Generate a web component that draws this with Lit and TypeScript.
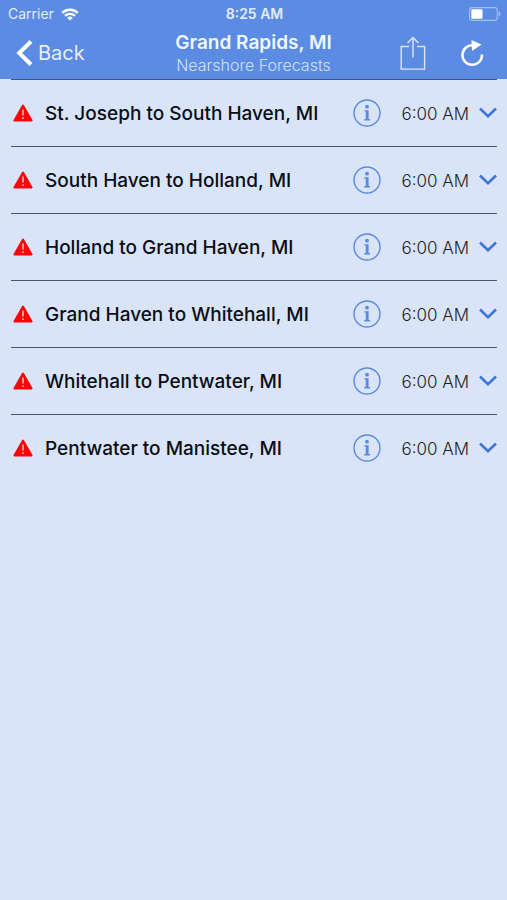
import { LitElement, html, css } from "lit";
import { customElement, property } from "lit/decorators.js";

interface Forecast {
  name: string;
  time: string;
}

const forecasts: Forecast[] = [
  { name: "St. Joseph to South Haven, MI", time: "6:00 AM" },
  { name: "South Haven to Holland, MI", time: "6:00 AM" },
  { name: "Holland to Grand Haven, MI", time: "6:00 AM" },
  { name: "Grand Haven to Whitehall, MI", time: "6:00 AM" },
  { name: "Whitehall to Pentwater, MI", time: "6:00 AM" },
  { name: "Pentwater to Manistee, MI", time: "6:00 AM" },
];

const reset = css`
  * {
    box-sizing: border-box;
  }
  svg {
    display: block;
    flex: none;
  }
  button {
    display: flex;
    align-items: center;
    border: 0;
    padding: 0;
    margin: 0;
    background: none;
    color: inherit;
    font: inherit;
    cursor: pointer;
  }
`;

@customElement("status-bar")
export class StatusBar extends LitElement {
  static styles = [
    reset,
    css`
      :host {
        display: grid;
        grid-template-columns: 1fr auto 1fr;
        align-items: center;
        height: 28px;
        padding: 0 6px 0 8px;
        font-size: 14px;
        line-height: 20px;
        color: #e3edff;
      }
      .carrier {
        display: flex;
        align-items: center;
        gap: 7px;
      }
      .clock {
        font-weight: 600;
      }
      .battery {
        justify-self: end;
      }
    `,
  ];

  render() {
    return html`
      <div class="carrier">
        <span>Carrier</span>
        <svg width="18" height="13" viewBox="0 0 18 13" fill="none" stroke="#fff" stroke-width="2.3">
          <path d="M1.2 4.9a11.2 11.2 0 0 1 15.6 0" />
          <path d="M4 7.8a7.2 7.2 0 0 1 10 0" />
          <path d="M9 12.6 6.2 9.9a4 4 0 0 1 5.6 0z" fill="#fff" stroke="none" />
        </svg>
      </div>
      <span class="clock">8:25 AM</span>
      <svg class="battery" width="32" height="14" viewBox="0 0 32 14">
        <rect x="0.6" y="0.6" width="27.6" height="12.8" rx="2.4" fill="none" stroke="#a3c0f3" stroke-width="1.1" />
        <rect x="2.3" y="2.2" width="11.2" height="9.6" rx="0.8" fill="#fff" />
        <path d="M29.6 4.6q2 .8 2 2.4t-2 2.4z" fill="#a3c0f3" />
      </svg>
    `;
  }
}

@customElement("nav-bar")
export class NavBar extends LitElement {
  static styles = [
    reset,
    css`
      :host {
        display: grid;
        grid-template-columns: 1fr auto 1fr;
        height: 51px;
        padding: 0 22px 0 16px;
        color: #f1f6ff;
      }
      .back {
        justify-self: start;
        gap: 5px;
        padding-bottom: 2px;
        font-size: 20px;
        line-height: 28px;
        color: #e6eeff;
      }
      .titles {
        padding: 4px 0 0 6px;
        text-align: center;
      }
      h1,
      p {
        margin: 0;
        line-height: 22px;
      }
      h1 {
        font-size: 19px;
        font-weight: 600;
      }
      p {
        font-size: 16px;
        font-weight: 300;
        color: #d0e0ff;
      }
      .actions {
        display: flex;
        justify-content: flex-end;
        gap: 34px;
        padding-bottom: 2px;
      }
    `,
  ];

  render() {
    return html`
      <button class="back">
        <svg width="17" height="28" viewBox="0 0 17 28" fill="none" stroke="#fff" stroke-width="4">
          <path d="M15 2.5 3.2 14 15 25.5" />
        </svg>
        Back
      </button>
      <div class="titles">
        <h1>Grand Rapids, MI</h1>
        <p>Nearshore Forecasts</p>
      </div>
      <div class="actions">
        <button aria-label="Share">
          <svg width="26" height="34" viewBox="0 0 26 34" fill="none" stroke="#dbe8ff" stroke-width="1.4">
            <path d="M9 10.5H1.2V33.1H24.6V10.5H17M13 21.5V1.5M7.5 7 13 1.5 18.5 7" />
          </svg>
        </button>
        <button aria-label="Refresh">
          <svg width="25" height="28" viewBox="0 0 25 28">
            <path d="M13 6.3A9.8 9.8 0 1 0 22 15.5" fill="none" stroke="#fff" stroke-width="2.5" />
            <path d="M11.5 1 21.5 5.6 12 12z" fill="#fff" />
          </svg>
        </button>
      </div>
    `;
  }
}

@customElement("forecast-row")
export class ForecastRow extends LitElement {
  @property({ attribute: false }) forecast!: Forecast;

  static styles = [
    reset,
    css`
      :host {
        display: flex;
        align-items: center;
        height: 67px;
        border-top: 1px solid #4c5566;
        padding-left: 2px;
      }
      .name,
      .time {
        padding-top: 2px;
        line-height: 24px;
        white-space: nowrap;
      }
      .name {
        flex: 1;
        margin: 0 0 0 12px;
        font-size: 19px;
        font-weight: 500;
        color: #0a0d14;
      }
      .time {
        margin: 0 10px 0 20px;
        font-size: 17px;
        font-weight: 300;
        color: #1b1f28;
      }
    `,
  ];

  render() {
    const { name, time } = this.forecast;
    return html`
      <svg width="20" height="18" viewBox="0 0 20 18" role="img" aria-label="Warning">
        <path d="M10 1.5 18.6 16.5H1.4z" fill="#fb0508" stroke="#fb0508" stroke-width="2" stroke-linejoin="round" />
        <path d="M10 5.5V11.5M10 13.2V15" stroke="#ffc4cb" stroke-width="1.5" />
      </svg>
      <h2 class="name">${name}</h2>
      <button aria-label="About ${name}">
        <svg width="28" height="28" viewBox="0 0 28 28">
          <circle cx="14" cy="14" r="13" fill="none" stroke="#5b8ae0" stroke-width="1.4" />
          <circle cx="14" cy="7.7" r="1.9" fill="#5b8ae0" />
          <path d="M11.3 11.3H15.6V20.1H17.1V21.4H11.2V20.1H12.7V12.5H11.3z" fill="#5b8ae0" />
        </svg>
      </button>
      <time class="time">${time}</time>
      <button aria-label="Expand ${name}">
        <svg width="18" height="12" viewBox="0 0 18 12" fill="none" stroke="#3f74d9" stroke-width="2.6">
          <path d="M1 1.5 9 9.2 17 1.5" />
        </svg>
      </button>
    `;
  }
}

@customElement("app-root")
export class AppRoot extends LitElement {
  static styles = [
    reset,
    css`
      :host {
        display: block;
        min-height: 100vh;
        background: #dae4f8;
        font-family: Inter, "Liberation Sans", sans-serif;
      }
      header {
        background: #5b8be2;
      }
      main {
        padding: 0 10px 0 11px;
      }
    `,
  ];

  render() {
    return html`
      <header>
        <status-bar></status-bar>
        <nav-bar></nav-bar>
      </header>
      <main>
        ${forecasts.map((f) => html`<forecast-row .forecast=${f}></forecast-row>`)}
      </main>
    `;
  }
}
